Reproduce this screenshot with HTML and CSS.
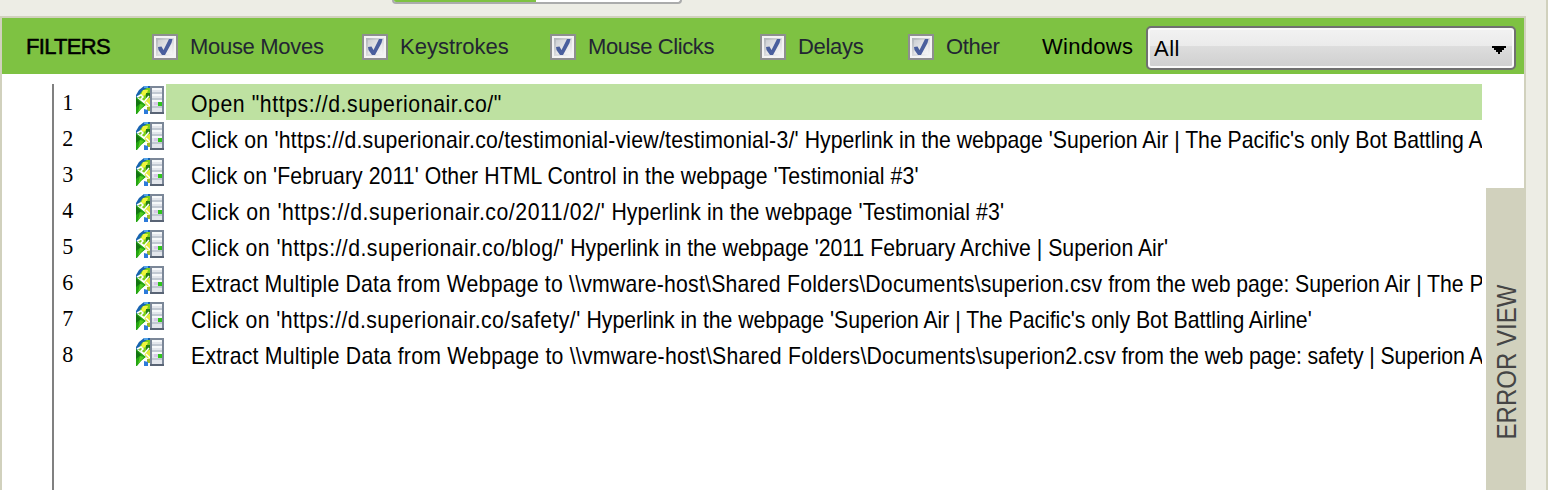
FILE: index.html
```html
<!DOCTYPE html>
<html lang="en">
<head>
<meta charset="utf-8">
<title>Task Editor</title>
<link rel="stylesheet" href="styles.css">
</head>
<body>
<svg class="defs" width="0" height="0" aria-hidden="true">
  <symbol id="check" viewBox="0 0 26 26">
    <linearGradient id="well" x1="0" y1="0" x2="1" y2="1"><stop offset="0" stop-color="#aeb3b9"/><stop offset=".5" stop-color="#d9dadd"/><stop offset="1" stop-color="#f6f6f6"/></linearGradient>
    <rect width="26" height="26" fill="#8e8f8f"/>
    <rect x="2" y="2" width="22" height="22" fill="#f4f4f4"/>
    <rect x="4" y="4" width="18" height="18" fill="url(#well)"/>
    <rect x="6" y="6" width="14" height="14" fill="#fff" opacity=".3"/>
    <path d="M6 13l3.500-.5 2 3.500L17 5h3.500l-1 4-6.500 12h-3L6.500 16z" fill="#4a5f9d"/>
  </symbol>
  <symbol id="web" viewBox="0 0 28 28">
    <path d="M0 12V9l3-5 5-4h6v3L8 6l-6 6z" fill="#1763b0"/>
    <path d="M8 0h4v2H8z" fill="#53a4ea"/>
    <path d="M2 11l4-6 5-3h3v10l-4 4-6-3z" fill="#7ccd1b"/>
    <path d="M7 4h5l-1 3-3 3-3-1z" fill="#f0f53c"/>
    <path d="M10 7h4v4l-4 2z" fill="#247d13"/>
    <path d="M8 16l5-4h1v9l-3-1z" fill="#e4e83a"/>
    <path d="M0 11l10 8-5 4-4 5H0z" fill="#23a512"/>
    <path d="M0 12l5 5-5 4z" fill="#137511"/>
    <path d="M4 18l4 1-6 7z" fill="#54cc20"/>
    <path d="M1 11l4-2 2 2-2 2 3 3 5-6" fill="none" stroke="#fff" stroke-width="1.500"/>
    <path d="M14 20l-4-4M10 20l-4 4" stroke="#fff" stroke-width="1.500"/>
    <path d="M11 21h3v4h-3z" fill="#a2bc28"/>
    <path d="M8 23l4 1v4H8z" fill="#2d7bda"/>
    <path d="M14 0h14v28H14z" fill="#7b8798"/>
    <path d="M16 2h10v24H16z" fill="#e3e6ec"/>
    <path d="M16 2h10v2H16zM16 8h10v2H16zM16 14h10v2H16z" fill="#f6f8fa"/>
    <path d="M16 6h10v2H16zM16 12h10v2H16zM16 20h10v2H16z" fill="#c1c8d2"/>
    <path d="M18 16h4v3h-4z" fill="#d7c8e8"/>
    <path d="M22 16h4v4h-4z" fill="#2fc51b"/>
    <path d="M14 26h14v2H14z" fill="#596475"/>
  </symbol>
</svg>
<div class="app">
  <div class="top"><div class="tab"><div class="tab-on"></div></div></div>
  <main class="panel">
    <header class="filters">
      <span class="title">FILTERS</span>
      <label class="filter"><svg class="box"><use href="#check"/></svg><span>Mouse Moves</span></label>
      <label class="filter keys"><svg class="box"><use href="#check"/></svg><span>Keystrokes</span></label>
      <label class="filter clicks"><svg class="box"><use href="#check"/></svg><span>Mouse Clicks</span></label>
      <label class="filter"><svg class="box"><use href="#check"/></svg><span>Delays</span></label>
      <label class="filter"><svg class="box"><use href="#check"/></svg><span>Other</span></label>
      <span class="windows">Windows</span>
      <div class="select"><span>All</span><svg width="14" height="8" shape-rendering="crispEdges"><path d="M0 0h14v2h-2v2h-2v2H8v2H6V6H4V4H2V2H0z"/></svg></div>
    </header>
    <div class="content">
      <div class="list">
        <div class="row selected"><span class="num">1</span><svg class="icon"><use href="#web"/></svg><div class="cell"><div class="text"><span style="letter-spacing:.65px">Open "https://d.superionair.co/"</span></div></div></div>
        <div class="row"><span class="num">2</span><svg class="icon"><use href="#web"/></svg><div class="cell"><div class="text"><span style="letter-spacing:.26px">Click on 'https://d.superionair.co/testimonial-view/testimonial-3/'</span><span style="letter-spacing:-.02px"> Hyperlink in the webpage 'Superion Air | The Pacific's only Bot Battling A</span></div></div></div>
        <div class="row"><span class="num">3</span><svg class="icon"><use href="#web"/></svg><div class="cell"><div class="text"><span style="letter-spacing:.08px">Click on 'February 2011' Other HTML Control in the webpage 'Testimonial #3'</span></div></div></div>
        <div class="row"><span class="num">4</span><svg class="icon"><use href="#web"/></svg><div class="cell"><div class="text"><span style="letter-spacing:.62px">Click on 'https://d.superionair.co/2011/02/'</span><span style="letter-spacing:.12px"> Hyperlink in the webpage 'Testimonial #3'</span></div></div></div>
        <div class="row"><span class="num">5</span><svg class="icon"><use href="#web"/></svg><div class="cell"><div class="text"><span style="letter-spacing:.5px">Click on 'https://d.superionair.co/blog/'</span><span> Hyperlink in the webpage '2011 February Archive | Superion Air'</span></div></div></div>
        <div class="row"><span class="num">6</span><svg class="icon"><use href="#web"/></svg><div class="cell"><div class="text"><span style="letter-spacing:.23px">Extract Multiple Data from Webpage to \\vmware-host\Shared Folders\Documents\superion.csv</span><span style="letter-spacing:-.05px"> from the web page: Superion Air | The P</span></div></div></div>
        <div class="row"><span class="num">7</span><svg class="icon"><use href="#web"/></svg><div class="cell"><div class="text"><span style="letter-spacing:.47px">Click on 'https://d.superionair.co/safety/'</span><span style="letter-spacing:-.04px"> Hyperlink in the webpage 'Superion Air | The Pacific's only Bot Battling Airline'</span></div></div></div>
        <div class="row"><span class="num">8</span><svg class="icon"><use href="#web"/></svg><div class="cell"><div class="text"><span style="letter-spacing:.25px">Extract Multiple Data from Webpage to \\vmware-host\Shared Folders\Documents\superion2.csv</span><span style="letter-spacing:-.12px"> from the web page: safety | Superion A</span></div></div></div>
      </div>
      <aside class="error"><span>ERROR VIEW</span></aside>
    </div>
  </main>
</div>
</body>
</html>
```
FILE: styles.css
```css
* { box-sizing: border-box; }
body { margin: 0; height: 490px; overflow: hidden; background: #edede5; font-family: "Liberation Sans", Arial, sans-serif; color: #000; }
.defs { display: block; }
.app { height: 490px; display: flex; flex-direction: column; border-right: 2px solid #d1d1bd; }
.top { height: 16px; flex: none; padding-left: 392px; }
.tab { width: 290px; height: 4px; background: #fff; border: 2px solid #abacac; border-top: 0; border-radius: 0 0 4px 4px; overflow: hidden; }
.tab-on { width: 142px; height: 2px; background: #7ec242; }
.panel { flex: 1; width: 1526px; display: flex; flex-direction: column; background: #fff; border: 2px solid #d1d1bd; border-bottom: 0; }
.filters { height: 56px; flex: none; padding-left: 24px; background: #7ec242; display: grid; grid-template-columns: 126px 210px 188px 210px 148px 134px 104px 370px; align-items: center; font-size: 22px; line-height: 26px; white-space: nowrap; }
.title { padding-top: 2px; letter-spacing: -.7px; -webkit-text-stroke: .5px #000; }
.filter { display: flex; align-items: center; gap: 12px; color: #222633; letter-spacing: -.3px; padding-top: 2px; }
.keys, .windows { letter-spacing: 0; }
.clicks { letter-spacing: -.4px; }
.windows { padding-top: 2px; letter-spacing: .3px; }
.box { width: 26px; height: 26px; flex: none; }
.select { height: 44px; margin-top: 4px; padding: 0 8px 0 6px; display: flex; align-items: center; justify-content: space-between; border: 2px solid #707070; border-radius: 5px; box-shadow: inset 0 0 0 2px #fafafa; background: linear-gradient(#f2f2f2, #ebebeb 46%, #dddddd 46%, #cfcfcf); letter-spacing: .5px; }
.select span { padding-top: 2px; }
.select svg { margin-top: 4px; }
.content { flex: 1; display: flex; }
.list { width: 1430px; margin: 10px 0 0 50px; border-left: 2px solid #808080; }
.row { height: 36px; display: flex; align-items: flex-start; }
.num { width: 82px; padding-left: 9px; font: 24px/36px "Liberation Serif", "Times New Roman", serif; transform: scaleX(.92); transform-origin: left; }
.icon { width: 28px; height: 28px; margin-top: 2px; flex: none; }
.cell { flex: 1; height: 36px; margin-left: 2px; padding-left: 25px; overflow: hidden; }
.selected .cell { background: #bee1a1; }
.text { width: max-content; white-space: pre; font-size: 24px; line-height: 40px; transform: scaleX(.885); transform-origin: left; }
.error { width: 38px; margin: 114px 0 0 4px; padding-top: 96px; background: #d1d1bd; display: flex; justify-content: center; align-items: flex-start; }
.error span { writing-mode: vertical-rl; transform: rotate(180deg) scaleY(.89); margin-top: -9px; margin-left: 3px; font-size: 27px; line-height: 32px; color: #454545; white-space: nowrap; }
```
